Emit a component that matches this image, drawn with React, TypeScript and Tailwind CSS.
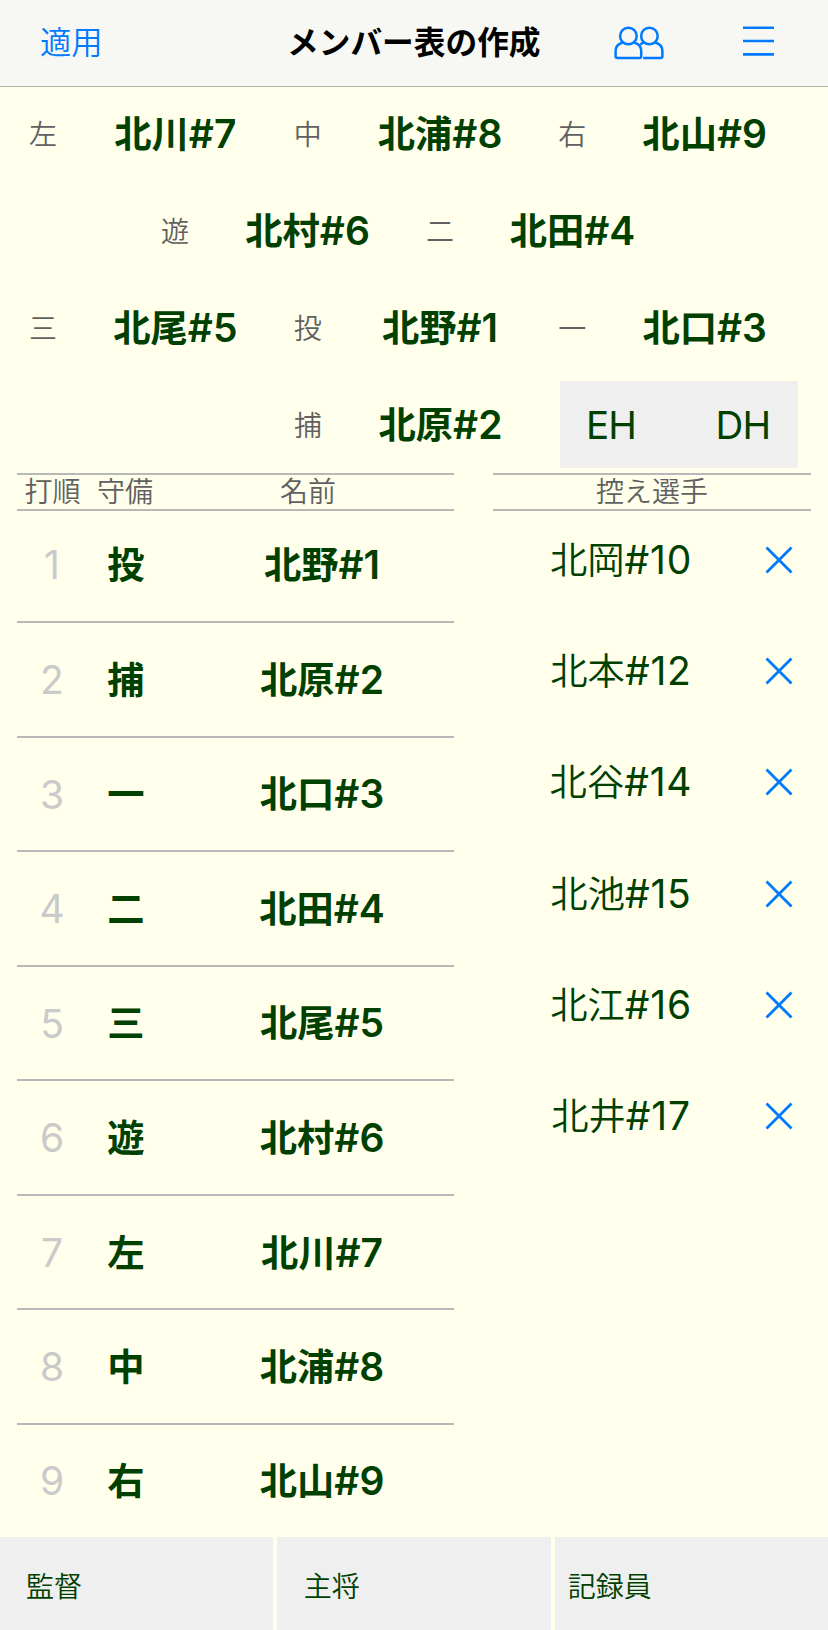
import React from "react";

type Position = { label: string; kanji: string; no: string };

const outfield: Position[] = [
  { label: "左", kanji: "北川", no: "7" },
  { label: "中", kanji: "北浦", no: "8" },
  { label: "右", kanji: "北山", no: "9" },
];
const middle: Position[] = [
  { label: "遊", kanji: "北村", no: "6" },
  { label: "二", kanji: "北田", no: "4" },
];
const infield: Position[] = [
  { label: "三", kanji: "北尾", no: "5" },
  { label: "投", kanji: "北野", no: "1" },
  { label: "一", kanji: "北口", no: "3" },
];
const catcher: Position = { label: "捕", kanji: "北原", no: "2" };

const order: Position[] = [
  infield[1],
  catcher,
  infield[2],
  middle[1],
  infield[0],
  middle[0],
  outfield[0],
  outfield[1],
  outfield[2],
];

const bench = [
  { kanji: "北岡", no: "10" },
  { kanji: "北本", no: "12" },
  { kanji: "北谷", no: "14" },
  { kanji: "北池", no: "15" },
  { kanji: "北江", no: "16" },
  { kanji: "北井", no: "17" },
];

const jp = "font-['Noto_Sans_CJK_JP',sans-serif]";

function StarterName({ kanji, no }: { kanji: string; no: string }) {
  return (
    <span className="flex items-baseline whitespace-nowrap leading-[48px] text-[#004000]">
      <span className="font-['Noto_Sans_CJK_JP',sans-serif] text-[37.3px] font-bold">{kanji}</span>
      <span className="font-['Inter',sans-serif] text-[39px] font-semibold">#{no}</span>
    </span>
  );
}

function FieldPosition({ label, kanji, no }: Position) {
  return (
    <div className="flex w-[265px] items-center">
      <span className={`${jp} w-[52px] pb-[5px] text-center text-[28px] font-[350] leading-10 text-[#606060]`}>{label}</span>
      <div className="flex flex-1 justify-center pb-[5px]">
        <StarterName kanji={kanji} no={no} />
      </div>
    </div>
  );
}

function CloseIcon() {
  return (
    <svg width="28" height="28" viewBox="0 0 28 28" fill="none" stroke="#007aff" strokeWidth="2.8">
      <path d="M1.5 1.5 26.5 26.5M26.5 1.5 1.5 26.5" />
    </svg>
  );
}

function PeopleIcon() {
  return (
    <svg width="50" height="34" viewBox="0 0 50 34" fill="none" stroke="#007aff" strokeWidth="2.5" strokeLinejoin="round">
      <circle cx="14.4" cy="10" r="8.3" />
      <circle cx="35.4" cy="10" r="8.3" />
      <path d="M9.2 16.4C4 17.4 1.6 20.8 1.6 25.5v4.8c0 1.2.6 1.6 1.8 1.6h22c1.2 0 1.8-.4 1.8-1.6v-4.8c0-4.7-2.4-8.1-7.6-9.1" />
      <path d="M26.3 18.6c1-1 2.2-1.9 3.9-2.2M40.6 16.4c5.2 1 7.8 4.4 7.8 9.1v4.8c0 1.2-.6 1.6-1.8 1.6H29.2" />
    </svg>
  );
}

function MenuIcon() {
  return (
    <svg width="31" height="34" viewBox="0 0 31 34" stroke="#007aff" strokeWidth="2.6">
      <path d="M0 1.7H31M0 15H31M0 28.4H31" />
    </svg>
  );
}

export default function App() {
  return (
    <div className="flex h-[1630px] w-[828px] flex-col overflow-hidden bg-[#ffffec]">
      <header className="flex h-[87px] shrink-0 items-center border-b border-[#b2b2aa] bg-[#f7f8f4] pl-10">
        <button className={`${jp} w-[62px] whitespace-nowrap pb-[4px] text-left text-[31.3px] font-[350] leading-10 text-[#007aff]`}>
          適用
        </button>
        <h1 className={`${jp} ml-[185px] w-[255px] whitespace-nowrap pb-[6px] text-[31.7px] font-bold leading-10 text-black`}>
          メンバー表の作成
        </h1>
        <button className="ml-[72px]">
          <PeopleIcon />
        </button>
        <button className="ml-[79px]">
          <MenuIcon />
        </button>
      </header>

      <section className="flex h-[386px] shrink-0 flex-col px-[17px]">
        <div className="flex h-[97px]">
          {outfield.map((p) => (
            <FieldPosition key={p.label} {...p} />
          ))}
        </div>
        <div className="flex h-[97px] pl-[132px]">
          {middle.map((p) => (
            <FieldPosition key={p.label} {...p} />
          ))}
        </div>
        <div className="flex h-[97px]">
          {infield.map((p) => (
            <FieldPosition key={p.label} {...p} />
          ))}
        </div>
        <div className="flex h-[95px] pl-[265px] pt-px">
          <FieldPosition {...catcher} />
          <div className="ml-[13px] mt-[2px] flex h-[87px] w-[238px] items-center justify-between bg-[#efefef] pl-[26px] pr-[28px] pt-[2px] font-['Inter',sans-serif] text-[38.5px] tracking-[-1px] text-[#004000]">
            <span>EH</span>
            <span>DH</span>
          </div>
        </div>
      </section>

      <main className="flex min-h-0 flex-1 justify-between px-[17px]">
        <section className="w-[437px]">
          <div className={`${jp} flex h-[38px] items-center border-y-2 border-[#b8b8b8] pb-[4px] text-[28px] font-[350] leading-8 text-[#606060]`}>
            <span className="w-[71px] text-center">打順</span>
            <span className="w-[74px] text-center">守備</span>
            <span className="w-[292px] text-center">名前</span>
          </div>
          <ol className="-mt-[2.57px]">
            {order.map((p, i) => (
              <li
                key={p.label}
                className="flex h-[114.57px] items-center border-b-2 border-[#b8b8b8] last:border-b-0 last:pb-[3px]"
              >
                <span className="w-[70px] pt-[2px] text-center font-['Inter',sans-serif] text-[39px] text-[#cacaca]">
                  {i + 1}
                </span>
                <span className={`${jp} w-[78px] pb-[3px] text-center text-[37.3px] font-bold leading-[48px] text-[#004000]`}>
                  {p.label}
                </span>
                <div className="flex flex-1 justify-center pb-px pl-[25px]">
                  <StarterName kanji={p.kanji} no={p.no} />
                </div>
              </li>
            ))}
          </ol>
        </section>

        <section className="w-[318px]">
          <div className={`${jp} flex h-[38px] items-center justify-center border-y-2 border-[#b8b8b8] pb-[4px] text-[28px] font-[350] leading-8 text-[#606060]`}>
            控え選手
          </div>
          <ul className="-mt-[6.6px]">
            {bench.map((p) => (
              <li key={p.no} className="flex h-[111.2px] items-center">
                <span className="flex w-[256px] items-baseline justify-center whitespace-nowrap pb-[2px] leading-[48px] text-[#004000]">
                  <span className="font-['Noto_Sans_CJK_JP',sans-serif] text-[37.3px] font-[350]">{p.kanji}</span>
                  <span className="font-['Inter',sans-serif] text-[39px] tracking-[0.8px]">#{p.no}</span>
                </span>
                <button className="ml-[16px]">
                  <CloseIcon />
                </button>
              </li>
            ))}
          </ul>
        </section>
      </main>

      <footer className={`${jp} grid h-[93px] shrink-0 grid-cols-3 gap-1 text-[28px] font-[350] leading-8 text-[#004000]`}>
        <div className="flex items-center bg-[#efefef] pl-[26px] pt-[3px]">監督</div>
        <div className="flex items-center bg-[#efefef] pl-[26.5px] pt-[3px]">主将</div>
        <div className="flex items-center bg-[#efefef] pl-[13px] pt-[3px]">記録員</div>
      </footer>
    </div>
  );
}
